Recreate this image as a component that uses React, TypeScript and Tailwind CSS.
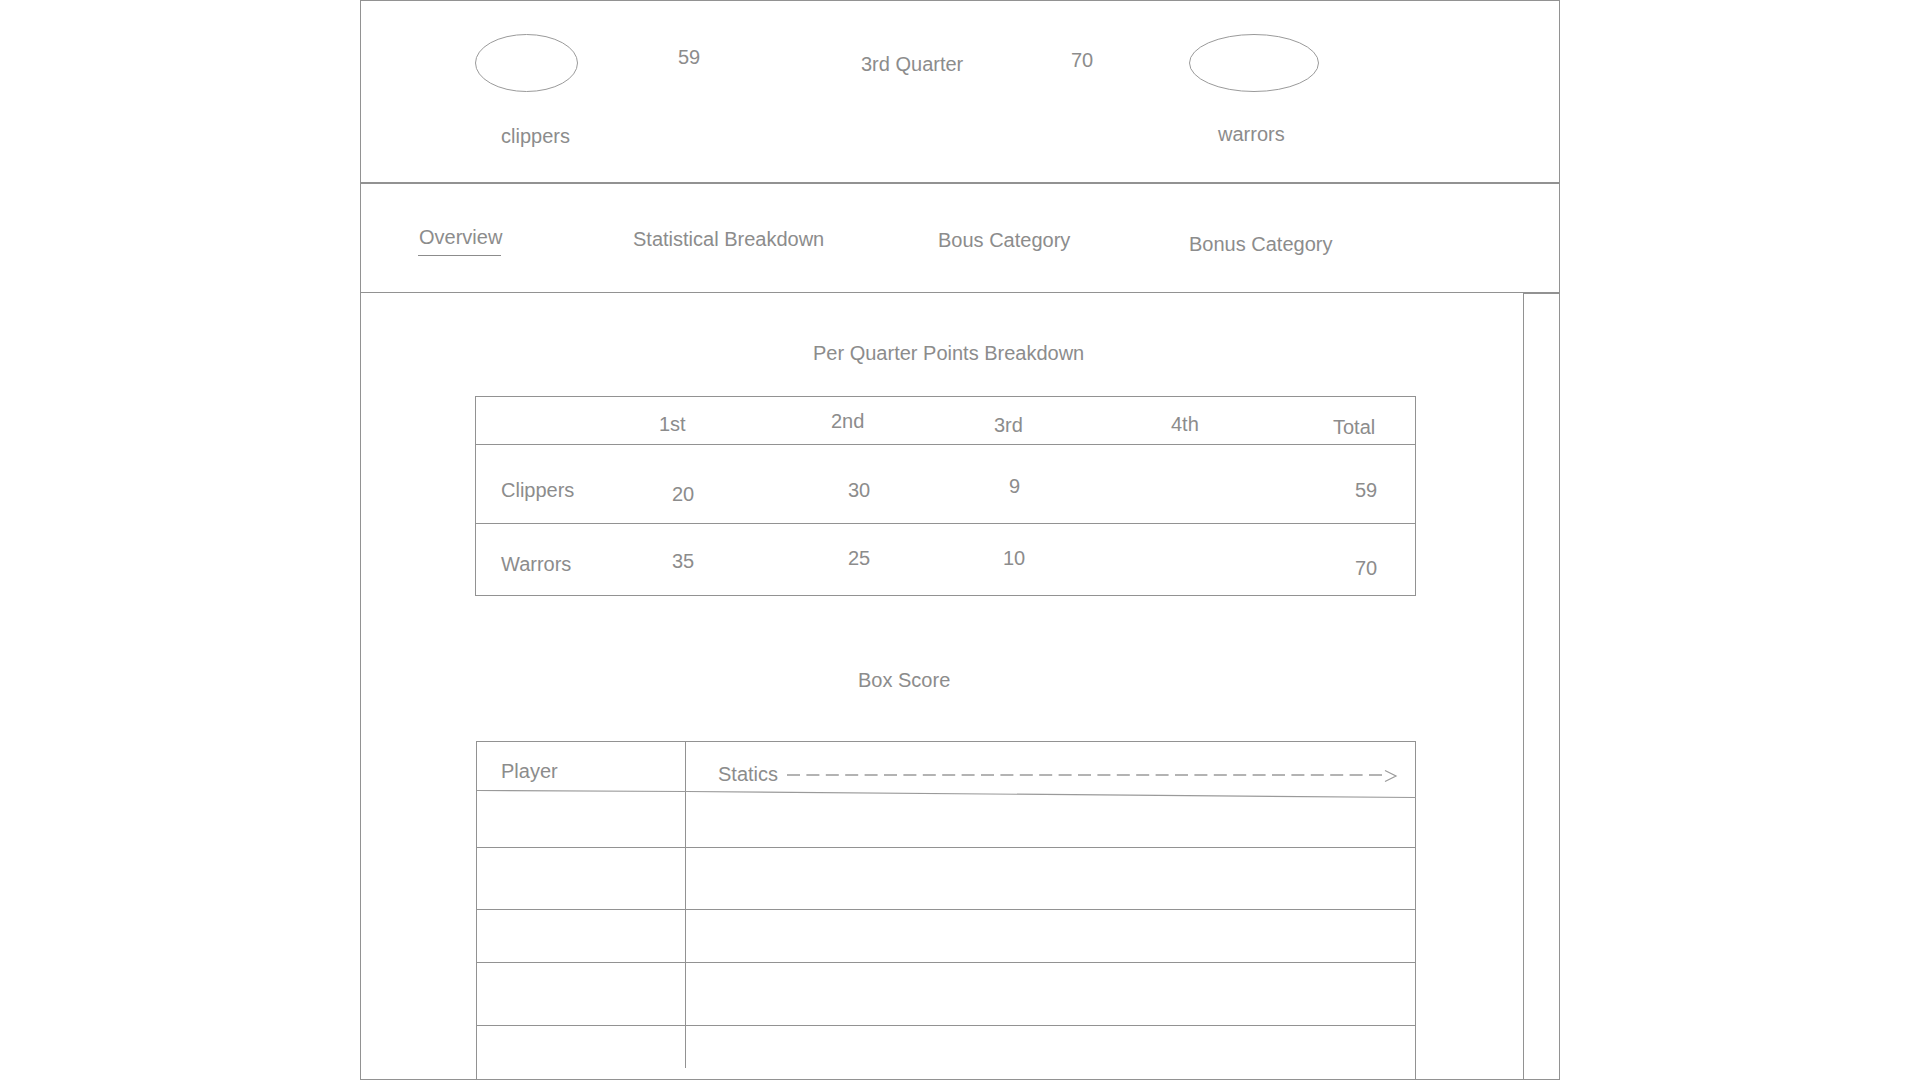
import React from 'react';

const widths = ['w-[180px]', 'w-[170px]', 'w-[160px]', 'w-[180px]', 'w-[160px]', 'flex-1'];

type CellSpec = { text: string; pad: string };

const quarterHeader: CellSpec[] = [
  { text: '', pad: '' },
  { text: '1st', pad: 'pl-[3px] pt-[15px]' },
  { text: '2nd', pad: 'pl-[5px] pt-[12px]' },
  { text: '3rd', pad: 'pl-[8px] pt-[16px]' },
  { text: '4th', pad: 'pl-[5px] pt-[15px]' },
  { text: 'Total', pad: 'pl-[7px] pt-[18px]' },
];

const quarterRows: CellSpec[][] = [
  [
    { text: 'Clippers', pad: 'pl-[25px] pt-[33px]' },
    { text: '20', pad: 'pl-[16px] pt-[37px]' },
    { text: '30', pad: 'pl-[22px] pt-[33px]' },
    { text: '9', pad: 'pl-[23px] pt-[29px]' },
    { text: '', pad: '' },
    { text: '59', pad: 'pl-[29px] pt-[33px]' },
  ],
  [
    { text: 'Warrors', pad: 'pl-[25px] pt-[28px]' },
    { text: '35', pad: 'pl-[16px] pt-[25px]' },
    { text: '25', pad: 'pl-[22px] pt-[22px]' },
    { text: '10', pad: 'pl-[17px] pt-[22px]' },
    { text: '', pad: '' },
    { text: '70', pad: 'pl-[29px] pt-[32px]' },
  ],
];

function QuarterRow({ cells, className }: { cells: CellSpec[]; className: string }) {
  return (
    <div className={`flex items-start ${className}`}>
      {cells.map((c, i) => (
        <div key={i} className={`${widths[i]} shrink-0 whitespace-nowrap ${c.pad}`}>
          {c.text}
        </div>
      ))}
    </div>
  );
}

function BoxRow({ className }: { className: string }) {
  return (
    <div className={`flex border-b border-[#929292] ${className}`}>
      <div className="w-[209px] shrink-0 border-r border-[#929292]" />
      <div className="flex-1" />
    </div>
  );
}

function Ellipse({ w }: { w: number }) {
  return (
    <svg width={w} height={58} viewBox={`0 0 ${w} 58`} className="block">
      <ellipse cx={w / 2} cy={29} rx={w / 2 - 0.5} ry={28.5} fill="none" stroke="#9a9a9a" strokeWidth={1} />
    </svg>
  );
}

export default function App() {
  return (
    <div className="bg-white font-['Liberation_Sans',Arial,sans-serif] text-[20px] leading-6 text-[#8c8c8c]">
      <div className="mx-auto flex h-[1080px] w-[1200px] flex-col overflow-hidden border border-[#929292]">
        {/* scoreboard */}
        <div className="flex h-[183px] shrink-0 items-start border-b-2 border-[#929292] pl-[114px]">
          <div className="w-[203px] shrink-0 pt-[33px]">
            <Ellipse w={103} />
            <div className="ml-[26px] mt-[32px] whitespace-nowrap">clippers</div>
          </div>
          <div className="w-[183px] shrink-0 pt-[44px]">59</div>
          <div className="w-[210px] shrink-0 whitespace-nowrap pt-[51px]">3rd Quarter</div>
          <div className="w-[118px] shrink-0 pt-[47px]">70</div>
          <div className="w-[140px] shrink-0 pt-[33px]">
            <Ellipse w={130} />
            <div className="ml-[29px] mt-[30px] whitespace-nowrap">warrors</div>
          </div>
        </div>

        {/* tabs */}
        <div className="flex h-[109px] shrink-0 items-start border-b border-[#929292] pl-[57px]">
          <div className="w-[215px] shrink-0 pt-[41px]">
            <div className="pl-px">Overview</div>
            <div className="mt-[6px] h-px w-[83px] bg-[#8c8c8c]" />
          </div>
          <div className="w-[305px] shrink-0 whitespace-nowrap pt-[43px]">Statistical Breakdown</div>
          <div className="w-[251px] shrink-0 whitespace-nowrap pt-[44px]">Bous Category</div>
          <div className="shrink-0 whitespace-nowrap pt-[48px]">Bonus Category</div>
        </div>

        {/* body */}
        <div className="flex min-h-0 flex-1">
          <div className="min-w-0 flex-1 overflow-hidden">
            <div className="ml-[114px] w-[941px]">
              <div className="mt-[48px] pl-[338px] whitespace-nowrap">Per Quarter Points Breakdown</div>

              <div className="mt-[31px] border border-[#929292]">
                <QuarterRow cells={quarterHeader} className="h-[48px] border-b border-[#929292]" />
                <QuarterRow cells={quarterRows[0]} className="h-[79px] border-b border-[#929292]" />
                <QuarterRow cells={quarterRows[1]} className="h-[71px]" />
              </div>

              <div className="mt-[72px] pl-[383px] whitespace-nowrap">Box Score</div>

              <div className="ml-px mt-[49px] border-x border-t border-[#929292]">
                <div className="flex h-[48px] items-start">
                  <div className="h-full w-[209px] shrink-0 border-r border-[#929292] pl-[24px] pt-[17px]">Player</div>
                  <div className="flex items-start pl-[32px]">
                    <span className="mt-[20px] whitespace-nowrap">Statics</span>
                    <svg width={612} height={16} viewBox="0 0 612 16" className="ml-[9px] mt-[26px] block">
                      <line x1={0} y1={7} x2={596} y2={7} stroke="#9a9a9a" strokeWidth={1.5} strokeDasharray="13 6.4" />
                      <path d="M598 2.5 L609 8 L598 13.5" fill="none" stroke="#9a9a9a" strokeWidth={1.2} />
                    </svg>
                  </div>
                </div>
                <svg width={939} height={9} viewBox="0 0 939 9" className="block">
                  <line x1={208.5} y1={0} x2={208.5} y2={9} stroke="#929292" strokeWidth={1} />
                  <polyline points="0,0.5 209,1.5 939,7.5" fill="none" stroke="#9a9a9a" strokeWidth={1.2} />
                </svg>
                <BoxRow className="h-[49px]" />
                <BoxRow className="h-[62px]" />
                <BoxRow className="h-[53px]" />
                <BoxRow className="h-[63px]" />
                <div className="flex h-[80px]">
                  <div className="h-[42px] w-[209px] shrink-0 border-r border-[#929292]" />
                </div>
              </div>
            </div>
          </div>
          <div className="w-[36px] shrink-0 border-l border-t border-[#929292]" />
        </div>
      </div>
    </div>
  );
}
